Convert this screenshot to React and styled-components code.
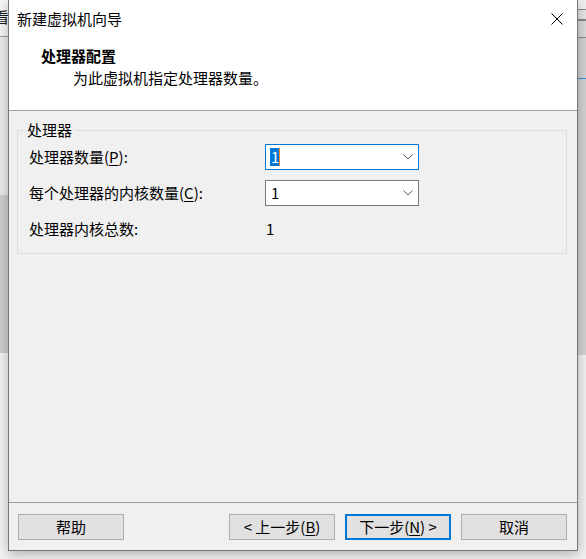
import React from 'react';
import styled, { createGlobalStyle } from 'styled-components';

const Global = createGlobalStyle`
  html, body { margin: 0; padding: 0; background: #f2f2f2; overflow: hidden; }
  body { font-family: "Noto Sans CJK SC", "Noto Sans", sans-serif; color: #000; }
  * { box-sizing: border-box; }
`;

const Screen = styled.div`
  width: 586px;
  height: 559px;
  display: flex;
  align-items: flex-start;
  overflow: hidden;
  background: #f1f1f1;
`;

const Backdrop = styled.div`
  flex: none;
  width: ${p => p.$w}px;
  height: 559px;
  overflow: hidden;
  display: flex;
  justify-content: flex-end;
  align-items: flex-start;
  background: ${p => p.$bg};
`;

const BackdropText = styled.span`
  flex: none;
  white-space: nowrap;
  font-size: 15px;
  line-height: 20px;
  margin-top: 7px;
  margin-right: -1px;
  color: #1a1a1a;
`;

const Window = styled.div`
  flex: none;
  position: relative;
  z-index: 1;
  width: 570px;
  height: 551px;
  border: 1px solid #767676;
  border-top: none;
  background: #f0f0f0;
  display: flex;
  flex-direction: column;
  box-shadow: 0 3px 12px rgba(0, 0, 0, 0.28);
`;

const Header = styled.div`
  flex: none;
  height: 111px;
  background: #fff;
  border-bottom: 1px solid #a0a0a0;
  display: flex;
  flex-direction: column;
`;

const TitleBar = styled.div`
  height: 38px;
  display: flex;
  align-items: center;
  padding-left: 8px;
`;

const TitleText = styled.div`
  flex: 1;
  font-size: 15px;
  line-height: 20px;
`;

const CloseButton = styled.div`
  width: 40px;
  height: 38px;
  display: flex;
  align-items: center;
  justify-content: center;
`;

const PageTitle = styled.div`
  margin: 8px 0 0 32px;
  font-size: 15px;
  line-height: 20px;
  font-weight: 700;
`;

const PageSubtitle = styled.div`
  margin: 2px 0 0 64px;
  font-size: 15px;
  line-height: 20px;
`;

const Body = styled.div`
  flex: 1;
  padding: 9px 10px 0 8px;
`;

const GroupBox = styled.fieldset`
  margin: 0;
  min-width: 0;
  border: 1px solid #dcdcdc;
  padding: 4px 11px 11px 11px;
`;

const Legend = styled.legend`
  padding: 0 3px;
  margin-left: -5px;
  font-size: 15px;
  line-height: 20px;
`;

const FormGrid = styled.div`
  display: grid;
  grid-template-columns: 236px 154px;
  grid-auto-rows: 26px;
  row-gap: 10px;
  align-items: center;
`;

const Label = styled.div`
  font-size: 15px;
  line-height: 20px;
  white-space: nowrap;
`;

const Key = styled.span`
  text-decoration: underline;
  text-underline-offset: 2px;
  text-decoration-thickness: 1px;
`;

const Combo = styled.div`
  width: 154px;
  height: 26px;
  background: #fff;
  border: 1px solid ${p => (p.$focused ? '#0078d7' : '#7a7a7a')};
  display: flex;
  align-items: center;
  padding: 0 5px 0 4px;
  font-size: 15px;
`;

const ComboValue = styled.span`
  line-height: 18px;
  padding-left: 1px;
`;

const SelectedValue = styled.span`
  display: inline-block;
  line-height: 18px;
  height: 18px;
  padding: 0 0 0 1px;
  background: #0078d7;
  color: #fff;
  border-right: 1px solid #ff8728;
`;

const Chevron = styled.svg`
  margin-left: auto;
  flex: none;
`;

const Value = styled.div`
  font-size: 15px;
  line-height: 20px;
  padding-left: 1px;
`;

const Footer = styled.div`
  flex: none;
  height: 48px;
  border-top: 1px solid #a0a0a0;
  padding: 11px 10px 0 9px;
  display: flex;
  align-items: flex-start;
  gap: 10px;
`;

const Button = styled.div`
  width: 106px;
  height: 26px;
  flex: none;
  display: flex;
  align-items: center;
  justify-content: center;
  background: #e1e1e1;
  border: ${p => (p.$default ? '2px solid #0078d7' : '1px solid #adadad')};
  font-size: 15px;
  line-height: 20px;
  white-space: nowrap;
  margin-left: ${p => (p.$pushRight ? 'auto' : '0')};
`;

const ChevronIcon = () => (
  <Chevron width="10" height="6" viewBox="0 0 10 6">
    <polyline points="0.5,0.5 5,5 9.5,0.5" fill="none" stroke="#5a5a5a" strokeWidth="1" />
  </Chevron>
);

export default function App() {
  return (
    <>
      <Global />
      <Screen>
        <Backdrop
          $w={8}
          $bg="linear-gradient(to bottom, #f7f7f7 0 36px, #a0a0a0 36px 37px, #ececec 37px 195px, #cfcfcf 195px 353px, #f4f4f4 353px)"
        >
          <BackdropText>查看</BackdropText>
        </Backdrop>
        <Window>
          <Header>
            <TitleBar>
              <TitleText>新建虚拟机向导</TitleText>
              <CloseButton>
                <svg width="12" height="12" viewBox="0 0 12 12">
                  <path d="M0.5 0.5 L11.5 11.5 M11.5 0.5 L0.5 11.5" stroke="#000" strokeWidth="1" fill="none" />
                </svg>
              </CloseButton>
            </TitleBar>
            <PageTitle>处理器配置</PageTitle>
            <PageSubtitle>为此虚拟机指定处理器数量。</PageSubtitle>
          </Header>
          <Body>
            <GroupBox>
              <Legend>处理器</Legend>
              <FormGrid>
                <Label>处理器数量(<Key>P</Key>):</Label>
                <Combo $focused>
                  <SelectedValue>1</SelectedValue>
                  <ChevronIcon />
                </Combo>
                <Label>每个处理器的内核数量(<Key>C</Key>):</Label>
                <Combo>
                  <ComboValue>1</ComboValue>
                  <ChevronIcon />
                </Combo>
                <Label>处理器内核总数:</Label>
                <Value>1</Value>
              </FormGrid>
            </GroupBox>
          </Body>
          <Footer>
            <Button>帮助</Button>
            <Button $pushRight>&lt; 上一步(<Key>B</Key>)</Button>
            <Button $default>下一步(<Key>N</Key>) &gt;</Button>
            <Button>取消</Button>
          </Footer>
        </Window>
        <Backdrop
          $w={8}
          $bg="linear-gradient(to bottom, #f0f0f0 0 9px, #8a8a8a 9px 10px, #e6e6e6 10px 19px, #8a8a8a 19px 21px, #dadada 21px 37px, #8a8a8a 37px 38px, #d2d2d2 38px 78px, #3b8ed6 78px 79px, #d2d2d2 79px 355px, #f2f2f2 355px)"
        />
      </Screen>
    </>
  );
}
